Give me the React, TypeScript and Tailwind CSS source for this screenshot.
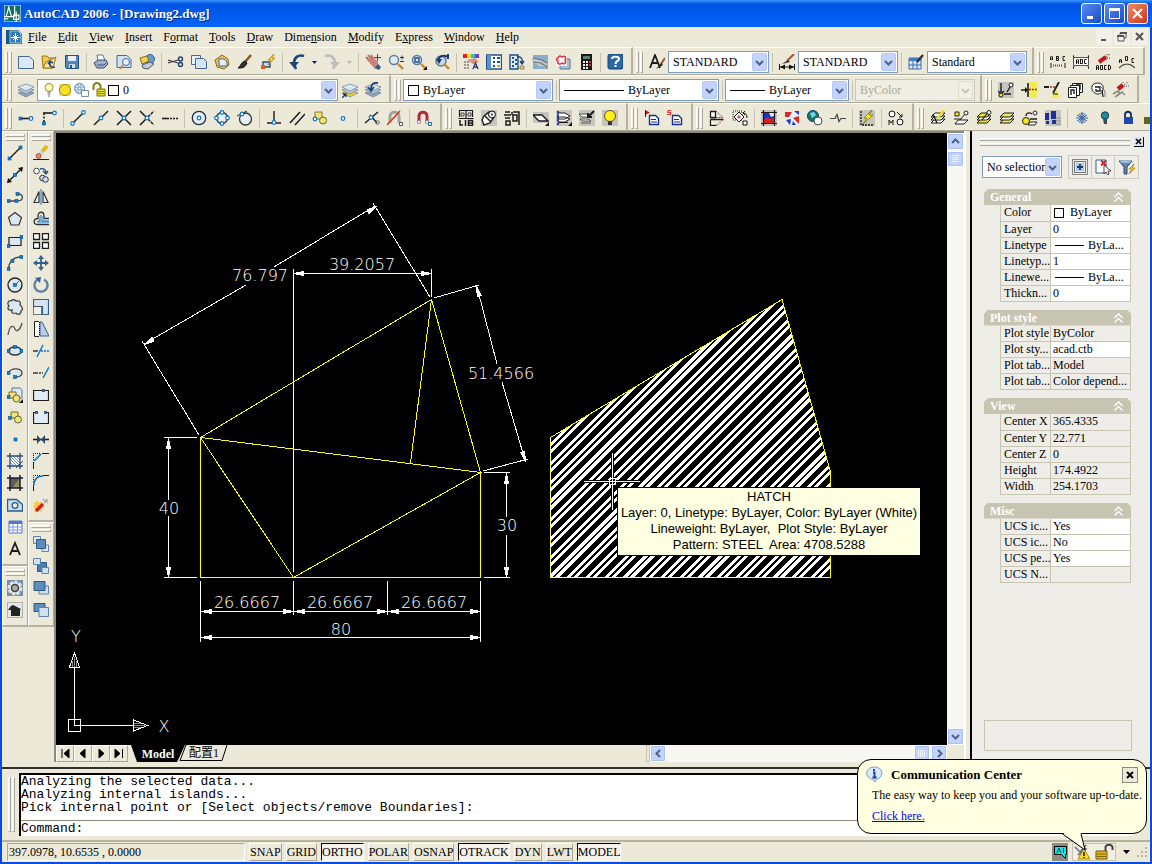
import type { ReactNode } from "react";

const serif = "font-['Liberation_Serif','Noto_Sans_CJK_TC',serif]";

type StrokeProps = { d: string; s?: string; f?: string; w?: number; dash?: string };

function L({ d, s = "#1c1c1c", f = "none", w = 1, dash }: StrokeProps) {
  return <path d={d} stroke={s} fill={f} strokeWidth={w} strokeDasharray={dash} />;
}

function Dot({ x, y }: { x: number; y: number }) {
  return <rect x={x - 1.5} y={y - 1.5} width="3" height="3" fill="#0a84d8" stroke="#064f8c" strokeWidth="0.6" />;
}

function Ring({ x, y }: { x: number; y: number }) {
  return <circle cx={x} cy={y} r="1.8" fill="#fff" stroke="#0a74c8" strokeWidth="1.2" />;
}

function Sheets({ top = "#dfe8f0", base = "#8da3ba" }: { top?: string; base?: string }) {
  return (
    <>
      <L d="M0 11l8 4 8-4-8-3z" f={base} s="#6d8197" w={0.7} />
      <L d="M0 8l8 4 8-4-8-3z" f="#b5c6d8" s="#6d8197" w={0.7} />
      <L d="M0 5l8 4 8-4-8-3z" f={top} s="#6d8197" w={0.7} />
    </>
  );
}

function BlackLayers({ fill = "#fff" }: { fill?: string }) {
  return (
    <>
      <L d="M1 13h10l4-4H5z" f={fill} />
      <L d="M1 10h10l4-4H5z" f="#fff" />
      <L d="M1 7h10l4-4H5z" f={fill} />
    </>
  );
}

const lens = <L d="M10 10l5 5" s="#c98a28" w={2.4} />;
const grayTile = <path d="M0 0h16v16H0z" fill="#c6c4be" />;

const icons: Record<string, ReactNode> = {
  // standard
  New: <L d="M.5 2.500h11l4 4v8H.5z" f="#d8e8f6" s="#47698c" />,
  Open: (
    <>
      <L d="M1 2h5l2 2h5l-2 10H2z" f="#f0c84a" s="#9a7418" />
      <L d="M5 8l10-5-3 11H2z" f="#ffe28a" s="#9a7418" />
      <L d="M14 13c-4 1-6-1-5-5M7 10l2-3 3 2" s="#1c4f8c" w={1.6} />
    </>
  ),
  Save: (
    <>
      <L d="M1.5 1.5h13v13h-12l-1-1z" f="#4f86c0" s="#274f80" />
      <path d="M4 2h8v5H4z" fill="#e6eef6" />
      <path d="M5 10h6v4H5z" fill="#d0dae6" />
      <path d="M6 11h2v3H6z" fill="#274f80" />
    </>
  ),
  Plot: (
    <>
      <L d="M4 1h6l2 6H5z" f="#fff" s="#60769a" />
      <L d="M1 9l4-3h8l2 4-4 4H4z" f="#9fb0cc" s="#3c4c70" />
      <L d="M4 11h7l2-2" s="#3c4c70" />
    </>
  ),
  "Plot Preview": (
    <>
      <L d="M1 1.5h10l4 4v8H1z" f="#cfe2f3" s="#47698c" />
      <circle cx="10" cy="8" r="3.5" fill="#eaf5ff" stroke="#3b6792" />
      <L d="M7 11l-3 4" s="#c98a28" w={2} />
    </>
  ),
  Publish: (
    <>
      <circle cx="11" cy="5" r="4.5" fill="#5f9bd2" stroke="#346699" />
      <L d="M1 4l7-2 2 5-7 3z" f="#f5cf4d" s="#8a6a10" />
      <L d="M3 11l8-3 4 2-6 5-5-1z" f="#c3cad8" s="#48566f" />
    </>
  ),
  Cut: (
    <>
      <L d="M0 6l10 3M0 9l10-3" s="#444" w={1.2} />
      <circle cx="12.5" cy="5" r="2" fill="none" stroke="#223e70" strokeWidth="1.4" />
      <circle cx="12.5" cy="10.5" r="2" fill="none" stroke="#223e70" strokeWidth="1.4" />
    </>
  ),
  Copy: (
    <>
      <L d="M.5 1.5h9v9h-9z" f="#e6eff8" s="#47698c" />
      <L d="M4.5 4.5h8l3 3v7h-11z" f="#d3e4f5" s="#47698c" />
    </>
  ),
  Paste: (
    <>
      <L d="M8 1l6 4 1 6-5 4-7-2-2-7z" f="#e3c064" s="#8b6a1e" />
      <L d="M5 5h5l3 3v4H5z" f="#e2eefa" s="#47698c" />
    </>
  ),
  "Match Properties": (
    <>
      <L d="M14 1l-6 7" s="#8a5a2a" w={2.6} />
      <L d="M8 7l2 2c-2 5-5 5-9 5 3-2 3-6 7-7z" f="#333" s="#111" />
    </>
  ),
  "Block Editor": (
    <>
      <L d="M3 8h7v5H3z" f="#c3dcf3" s="#24507e" w={1.4} />
      <path d="M1 11h4v4H1z" fill="#e06410" />
      <L d="M14 0L8 6h3l-3 5 7-7h-3z" f="#ffd838" s="#a07410" w={0.7} />
    </>
  ),
  Undo: (
    <>
      <L d="M15 2C9 0 5 4 5 9c0 2 1 4 2 6" s="#1f4478" w={2.6} />
      <path d="M0 8h10l-5 6z" fill="#1f4478" />
    </>
  ),
  Redo: (
    <>
      <L d="M1 2c6-2 10 2 10 7 0 2-1 4-2 6" s="#bcbcb8" w={2.6} />
      <path d="M16 8H6l5 6z" fill="#bcbcb8" />
    </>
  ),
  "Pan Realtime": (
    <>
      <L d="M1 3l3 3M3 1l4 5M6 1l3 5" s="#b06c5c" w={1.8} />
      <path d="M2 6l7-2 4 4v6l-3 1z" fill="#c98474" />
      <path d="M10 14l3-4 3 3-2 3z" fill="#2f5c90" />
      <L d="M12.5 0v7M9 3.500h7" s="#1f4f86" />
    </>
  ),
  "Zoom Realtime": (
    <>
      <circle cx="6" cy="6" r="4.5" fill="#dcebf7" stroke="#5c7c9c" strokeWidth="1.5" />
      {lens}
      <L d="M12 3.5h4M14 1.5v4M12 7.5h4" s="#1f3f70" />
    </>
  ),
  "Zoom Window": (
    <>
      <circle cx="6" cy="6" r="4.5" fill="#dcebf7" stroke="#5c7c9c" strokeWidth="1.5" />
      <L d="M4 4h4v4H4z" s="#1f4f90" w={1.4} />
      {lens}
      <path d="M16 12v4h-4z" fill="#111" />
    </>
  ),
  "Zoom Previous": (
    <>
      <circle cx="7" cy="7" r="5" fill="#c3d8ea" stroke="#5c7c9c" strokeWidth="1.5" />
      <L d="M4 6c2-5 6-5 10-3M14 0v5" s="#183a6c" w={2} />
      <path d="M2 5h6l-3 5z" fill="#183a6c" />
      {lens}
    </>
  ),
  Properties: (
    <>
      <path d="M0 0h4v4H0z" fill="#e32020" />
      <path d="M4 0h4v4H4z" fill="#f8e020" />
      <path d="M8 0h4v4H8z" fill="#18c8c8" />
      <path d="M12 0h4v4h-4z" fill="#9030d0" />
      <path d="M4 6l8-2 4 4-6 2z" fill="#d89080" />
      <L d="M1 8h6M1 11h6M1 14h6" s="#444" dash="2 1" />
      <L d="M10 15l2.500-6 2.500 6M11 13h3" s="#223e70" w={1.3} />
    </>
  ),
  DesignCenter: (
    <>
      <L d="M.5 1h15v14H.5z" f="#fff" s="#1f4f86" w={1.4} />
      <path d="M1 1h4v14H1z" fill="#5f92c8" />
      <L d="M7 4h2M11 4h3M7 8h2M11 8h3M7 12h2" s="#1f4f86" w={2} />
      <path d="M11 11h3v2h-3z" fill="#d8a820" />
    </>
  ),
  "Tool Palettes": (
    <>
      <L d="M1 1h8v14H1z" f="#dcebf7" s="#1f4f86" w={1.4} />
      <L d="M3 4h2M3 8h2M3 12h2M6 6h2M6 10h2" s="#1f4f86" w={2} />
      <L d="M8 3c4-1 6 2 5 6M11 7l2 3 2-3" s="#1f4478" w={1.4} />
      <path d="M11 12h4v3h-4z" fill="#f0d060" stroke="#555" strokeWidth=".6" />
    </>
  ),
  "Sheet Set Manager": (
    <>
      <path d="M1 1h15v14H1z" fill="#85aecb" />
      <path d="M0 4l9 1 6 4v4l-8-1-7-5z" fill="#c4c6c6" />
      <L d="M1 8l8 1 6 4M1 4l9 2 5 3" s="#667480" w={1.2} />
    </>
  ),
  "Markup Set Manager": (
    <>
      <L d="M5 5h10v10H5z" f="#a7bfd8" s="#5a7896" />
      <path d="M1 1h11v11H1z" fill="#f8f4f4" />
      <L d="M3 4c1-3 3-2 4-1 3-2 5 1 3 3 2 3-1 5-3 3-2 2-5 1-4-2-2 0-2-3 0-3z" s="#d83038" w={1.4} />
    </>
  ),
  QuickCalc: (
    <>
      <rect x="3" y="0" width="11" height="16" fill="#181818" />
      <path d="M5 2h7v3H5z" fill="#58806c" />
      <path d="M5 7h2v2H5zM8 7h2v2H8zM5 10h2v2H5zM8 10h2v2H8zM5 13h2v2H5zM8 13h2v2H8z" fill="#eee" />
      <path d="M11 7h2v2h-2zM11 10h2v2h-2z" fill="#d03030" />
    </>
  ),
  Help: (
    <>
      <rect x="1" y="0" width="15" height="15" rx="2" fill="#2c68a8" stroke="#173f70" />
      <L d="M5 5c0-3 7-3 7 0 0 2-3.500 2-3.500 5M8.500 11v2" s="#fff" w={2} />
    </>
  ),
  // styles
  "Text Style": (
    <>
      <L d="M1 14L6 1l5 13M3 9h6" w={1.8} />
      <L d="M16 4l-4 6" s="#8a5a2a" w={2} />
      <path d="M7 15l5-6 2 2z" fill="#222" />
    </>
  ),
  "Dimension Style": (
    <>
      <L d="M.5 10v6M15.500 10v6M1 13h14" />
      <path d="M1 13l5-2.500v5zM15 13l-5-2.500v5z" fill="#111" />
      <L d="M15 0L8 7" s="#a8542a" w={2} />
      <path d="M3 10l6-4 2 2z" fill="#333" />
    </>
  ),
  "Table Style": (
    <>
      <L d="M1 4h12v11H1z" f="#d4e6fa" s="#3a6ea8" />
      <path d="M1 4h12v3H1z" fill="#3f7cc4" />
      <L d="M1 11h12M5 7v8M9 7v8" s="#3a6ea8" />
      <L d="M15 1L9 8" s="#333" w={2.4} />
    </>
  ),
  "Text Fit": (
    <>
      <L d="M.5 6V3l1-1 1 1v3M.5 5h2M6.500 2v4.500h2v-2h-2M6.500 2.500h2v2M15 2.500h-2v4h2" />
      <L d="M1 9v5M15 9v5" />
      <L d="M3 11.5h10" s="#c02020" dash="1 1" w={2} />
    </>
  ),
  "Text Mask": (
    <>
      <L d="M.5 3.500h15v8H.5z" f="#fff" s="#555" />
      <L d="M1 4L0 1M15 4l1-3M1 12l-1 3M15 12l1 3" />
      <L d="M3.500 10V6l1-1 1 1v4M3.500 8h2M7.500 5v5M7.500 5.500h2v4h-2M13.500 5.500h-2v4h2" />
    </>
  ),
  "Explode Text": (
    <>
      <L d="M3 8l7-5" s="#c41818" w={4} />
      <L d="M10 3l4-3M11 4h4M11 0v2" s="#444" dash="1 1" />
      <L d="M.5 16v-4l1-1 1 1v4M.5 14h2M4.500 11.500h2v4h-2zM10.500 11.500h-2v4h2M12.500 11v5l2-1v-3z" />
    </>
  ),
  "Arc Aligned Text": (
    <>
      <L d="M.5 9V6l1-1 1 1v3M.5 7h2M6.500 2.500h2v4h-2zM15 4.500h-2v4h2" />
      <L d="M0 14c5-5 11-5 16 0" s="#555" w={1.4} />
    </>
  ),
  // layers
  "Layer Manager": <Sheets />,
  "Make Layer Current": (
    <>
      <Sheets base="#f0d020" />
      <L d="M0 16l4-4M1 12h3v3" s="#123a70" w={1.3} />
    </>
  ),
  "Layer Previous": (
    <>
      <Sheets />
      <L d="M13 1C8 0 6 3 6 7M3 5l3 4 3-4" s="#1f4478" w={1.8} />
    </>
  ),
  "Xref to Block": (
    <>
      {grayTile}
      <L d="M3 1v11M0 9l3 3 3-3M9 10l5-8M6 12h7" w={1.4} />
      <circle cx="13" cy="3" r="2" fill="#fff" stroke="#222" />
      <circle cx="3" cy="13" r="2" fill="#f6e626" stroke="#222" />
    </>
  ),
  "Block Trim": (
    <>
      <path d="M9 0h7v16H9L5 8z" fill="#f2ea58" />
      <L d="M0 8h6M7 1v14" w={1.6} />
      <path d="M4 5l3 3-3 3z" fill="#111" />
      <L d="M8 7.5h8" s="#b02020" dash="2 1" w={1.5} />
    </>
  ),
  "Block Extend": (
    <>
      <path d="M12 6l4 10H7z" fill="#f2ea58" />
      <L d="M0 5h5M9 11l6-11" w={1.8} />
      <L d="M6 5h5" s="#b02020" dash="2 1" w={1.5} />
      <L d="M9 12h5" />
    </>
  ),
  "Move Copy Rotate": (
    <>
      <L d="M5.500 1.500h10v9h-10z" f="#fff" />
      <L d="M3.500 3.500h9v10h-9z" f="#fff" />
      <L d="M1.500 5.500h8v10h-8z" f="#fff" />
      <L d="M4 13V8h3v4M9 3h4v5" w={1.4} />
    </>
  ),
  "Revision Cloud": (
    <>
      <L d="M2 4c2-4 9-4 11 0 1 4-1 8-5 8s-7-4-6-8z" f="#fff" />
      <L d="M5 5h5v4H6V7M12 8l1 7" w={1.3} />
      <L d="M10 4l5 5v6" s="#777" />
    </>
  ),
  "Burst Attributes": (
    <>
      <L d="M5 7l5-4" s="#c41818" w={4.5} />
      <L d="M11 3l4-3M11 4h5M10 0v2" s="#555" dash="1 1" />
      <L d="M0 12l5-3 2 2-5 4M4 14l5-4 3 3" s="#888" w={1.6} />
    </>
  ),
  // object snap
  "Temporary Track Point": (
    <>
      <L d="M2 8.5h10" w={1.6} />
      <Dot x={2.5} y={8.5} />
      <Ring x={13} y={8.5} />
    </>
  ),
  "Snap From": (
    <>
      <L d="M2 3h10" w={1.6} />
      <L d="M3 3v10" dash="2 1.5" w={1.6} />
      <Dot x={3} y={13.5} />
      <Ring x={13.5} y={3} />
    </>
  ),
  Endpoint: (
    <>
      <L d="M3 13L13 3" w={1.4} />
      <Ring x={2.5} y={13.5} />
      <Ring x={13.5} y={2.5} />
    </>
  ),
  Midpoint: (
    <>
      <L d="M1 15L15 1" w={1.4} />
      <Ring x={8} y={8} />
    </>
  ),
  Intersection: (
    <>
      <L d="M1 1l14 14M1 15L15 1" w={1.5} />
      <Ring x={8} y={8} />
    </>
  ),
  "Apparent Intersection": (
    <>
      <L d="M1 1l7 7M1 15l7-7" w={1.5} />
      <L d="M9 9l6 6M9 7l6-6" dash="3 1" w={1.5} />
      <Ring x={8} y={8} />
    </>
  ),
  Extension: (
    <>
      <L d="M0 8.5h7" w={1.6} />
      <L d="M8 8.5h8" dash="2 1" w={1.4} />
    </>
  ),
  Center: (
    <>
      <circle cx="8" cy="8" r="6.7" fill="#e8eff8" stroke="#1d2e48" strokeWidth="1.3" />
      <Ring x={8} y={8} />
    </>
  ),
  Quadrant: (
    <>
      <circle cx="8" cy="8" r="5.5" fill="#e8eff8" stroke="#333" strokeWidth="1.4" />
      <Ring x={8} y={2.5} />
      <Ring x={8} y={13.5} />
      <Ring x={2.5} y={8} />
      <Ring x={13.5} y={8} />
    </>
  ),
  Tangent: (
    <>
      <circle cx="8.5" cy="9" r="6" fill="#e8eff8" stroke="#333" strokeWidth="1.3" />
      <L d="M0 6l10-5" />
      <Ring x={5} y={4} />
    </>
  ),
  Perpendicular: (
    <>
      <L d="M8 1v12M1 13h14" w={1.4} />
      <Ring x={8} y={12.5} />
    </>
  ),
  Parallel: <L d="M1 13L11 2M6 15L16 4" w={1.5} />,
  Insert: (
    <>
      <path d="M3 2h7v7H3z" fill="#f3e37a" stroke="#8a7a20" />
      <circle cx="11" cy="10.5" r="3.5" fill="#f3e37a" stroke="#5a6a30" />
      <Ring x={3} y={9} />
    </>
  ),
  Node: <Ring x={8} y={8.5} />,
  Nearest: (
    <>
      <L d="M1 13L14 2M6 5l7 8" w={1.4} />
      <Ring x={7} y={7.5} />
      <circle cx="13.5" cy="12.5" r="1.8" fill="none" stroke="#666" />
    </>
  ),
  "Snap None": (
    <>
      <L d="M3 13V6c0-5 9-5 9 0v7" s="#a4a4a0" w={3} />
      <L d="M0 15L13 1" s="#d83a2a" w={1.6} />
      <path d="M12.500 12.500h3v3h-3z" fill="#fff" stroke="#555" />
    </>
  ),
  "Snap Settings": (
    <>
      <L d="M3 13V6c0-5 8-5 8 0v7" s="#b3283a" w={3} />
      <path d="M1.5 10.500h3v3h-3zM9.5 10.500h3v3h-3z" fill="#eee" stroke="#666" strokeWidth=".5" />
      <path d="M12.500 12.500h3v3h-3z" fill="#fff" stroke="#0a74c8" />
    </>
  ),
  // layout tools
  Library: (
    <>
      <L d="M1.500 7V.5h13V7M.5 8.500h15M8 1v7" w={1.2} />
      <L d="M3 3h3v3H3zM10 3h3v3h-3z" s="#444" />
      <L d="M2 10v5h3M7.500 10v6M10.500 10.500h4v5h-4zM11 13h3" w={1.5} />
    </>
  ),
  Bolt: (
    <>
      {grayTile}
      <L d="M1 10l2-4 5-4 5 5-4 6-6 2z" f="#fff" w={1.4} />
      <L d="M4 6l6 6M7 4l4 4" w={1.5} />
      <circle cx="11" cy="4.500" r="3.500" fill="#e8e8e4" stroke="#111" />
      <circle cx="11" cy="4.500" r="1" fill="#444" />
    </>
  ),
  Annotate: <L d="M1 2h5M0 5h7M1 8h5M2 11h4v4H2zM9 2h6v13M9 5h4v6H9zM8 2v3" w={1.5} />,
  Plane: (
    <>
      <path d="M0 2h16v11H0z" fill="#c6c4be" />
      <L d="M0 5h9l6 6H6z" f="#fff" w={1.4} />
      <path d="M16 12v4h-4z" fill="#111" />
    </>
  ),
  Stack: (
    <>
      {grayTile}
      <L d="M2 3h7l5 3-5 3H2zM2 7h7l5 2-5 3H2zM2 12.500h10" f="#fff" />
      <L d="M2 1v14" s="#2038c8" w={2} dash="2 2" />
      <path d="M16 12v4h-4z" fill="#111" />
    </>
  ),
  "Stack Back": (
    <>
      {grayTile}
      <L d="M0 4h8l3 3H3zM1 9h8l3 2H4zM2 13h10" f="#fff" s="#555" />
      <L d="M15 1L9 7M9 3v4h4" w={2} />
    </>
  ),
  Lamp: (
    <>
      {grayTile}
      <circle cx="8" cy="6" r="5.5" fill="#fff21c" stroke="#5e5a10" />
      <path d="M6 11h4v4H6z" fill="#333" />
    </>
  ),
  "Page Flag": (
    <>
      <L d="M5.500 5.500h6l3 3v6h-9z" f="#fff" s="#1a2c8c" w={1.4} />
      <L d="M7 9.500h5M7 12h6" s="#1a2c8c" />
      <path d="M1 0l5 2.500L1 5z" fill="#c01818" />
      <L d="M1.500 0v7" />
    </>
  ),
  "Page Script": (
    <>
      <L d="M5.500 5.500h6l3 3v6h-9z" f="#fff" s="#1a2c8c" w={1.4} />
      <L d="M7 9.500h5M7 12h6" s="#1a2c8c" />
      <L d="M4 .5H1v2h2.500v2H0" s="#e03030" w={1.2} />
    </>
  ),
  "Clip Boundary": (
    <>
      <L d="M1.500 1.500h5v6h-5zM1.500 9.500h13M1.500 9.500v6h6" f="#fff" w={1.3} />
      <L d="M7 1l7 6.500H7M8 15.500l6-6" s="#a83a3a" dash="2 1" />
    </>
  ),
  "Rotate Clip": (
    <>
      <L d="M1 1h9v9H1z" dash="1 1" />
      <L d="M7 2l5 5-5 5-5-5z" f="#fff" />
      <L d="M11 3c3 0 4 2 4 5M11 3l2-2M11 3l2 2" />
      <L d="M7 5v4M5 7h4" s="#a83a3a" />
      <path d="M11 11h4v4h-4z" fill="#fff" stroke="#111" />
    </>
  ),
  "Image Frame": (
    <>
      {grayTile}
      <path d="M3 3h10v10H3z" fill="#1c30d0" />
      <path d="M3 10l3-3 4 2 3-1v5H3z" fill="#d82020" />
      <path d="M8 3h5v3l-3 1z" fill="#e2f0fa" />
      <L d="M2.5 0v16M13.5 0v16M0 2.5h16M0 13.5h16" w={1.2} />
    </>
  ),
  "Image Clip": (
    <>
      <path d="M1 1h14v14H1z" fill="#e2f0fa" />
      <path d="M1 2h7L5 7H1zM9 8l6-2v8z" fill="#d82828" />
      <path d="M10 1h5v4zM2 10l5-1-1 6zM9 11l3 4H8z" fill="#2038c8" />
    </>
  ),
  "Image Globe": (
    <>
      <circle cx="6" cy="6" r="5.5" fill="#147a68" stroke="#083c6c" />
      <path d="M3 3l4-1 2 3-4 3z" fill="#7cd0f0" />
      <circle cx="11" cy="11" r="4" fill="#fff" stroke="#444" />
    </>
  ),
  "Break Line": <L d="M0 8.5h5l2-4 2 7 2-3h5" s="#444" w={1.2} />,
  "Quick Select": (
    <>
      {grayTile}
      <L d="M2 1v14h13" dash="2 1" w={1.3} />
      <L d="M13 0L5 8h3l-4 6 10-9h-4z" f="#fff21c" s="#777010" w={0.8} />
    </>
  ),
  "Move Objects": (
    <>
      <circle cx="4" cy="4" r="3" fill="#fff" stroke="#111" />
      <circle cx="12" cy="12" r="3" fill="#fff" stroke="#111" />
      <L d="M1 15v-5l2 3 2-3v5M9 2l5 5M11 7h3V4" />
    </>
  ),
  // layers II
  "Layer Edit": (
    <>
      <BlackLayers />
      <L d="M14 0l-7 9" s="#f0dc28" w={2.6} />
      <L d="M3 4l4 9" w={1.4} />
    </>
  ),
  "Layer Match": (
    <>
      <L d="M2 14h9l4-4H5z" f="#fff" />
      <path d="M2 2h4v4H2z" fill="#f6e626" stroke="#222" />
      <L d="M7 10l5-6M1 9h7" />
      <circle cx="13" cy="3" r="2" fill="#fff" stroke="#222" />
    </>
  ),
  "Layer Current": (
    <>
      <BlackLayers fill="#f6e626" />
      <L d="M6 10l7-9" w={1.2} />
      <circle cx="13" cy="2.5" r="2" fill="#fff" stroke="#222" />
    </>
  ),
  "Layer Isolate": <BlackLayers fill="#f2e458" />,
  "Layer Copy": (
    <>
      <L d="M6 15h7l2-3H8z" f="#fff" />
      <circle cx="4" cy="11" r="3.5" fill="#f6e626" stroke="#222" />
      <circle cx="13" cy="3" r="2" fill="#fff" stroke="#222" />
      <L d="M4 6c0-3 3-4 6-2M8 9h7" w={1.3} />
    </>
  ),
  "Layer Walk": (
    <>
      {grayTile}
      <path d="M0 3h4v7H0zM6 1h5v8H6z" fill="#1c2f9c" />
      <path d="M1 11h3v3H1zM7 10h4v4H7z" fill="#1c2f9c" />
      <L d="M11 8h5M11 11h5M11 14h5" s="#888" />
    </>
  ),
  "Layer Freeze": (
    <L d="M8 2v12M3 5l10 6M3 11l10-6M6.500 3L8 4.500 9.500 3M6.500 13L8 11.500 9.500 13M2 8h12M5 3.500L11 12.500M11 3.500L5 12.500" s="#2c5cac" />
  ),
  "Layer Off": (
    <>
      <circle cx="8" cy="5.5" r="3.7" fill="#1e8c94" stroke="#0e3c5c" />
      <path d="M6 9h4v5H7z" fill="#3c4a54" />
    </>
  ),
  "Layer Lock": (
    <>
      <L d="M5 7V4c1-3 5-3 6 0v3" s="#0e2a58" w={1.8} />
      <path d="M4 7h9v7H4z" fill="#1c48b0" />
    </>
  ),
  "Layer Unlock": (
    <>
      <L d="M8 7V3c1-2 5-2 6 0v4" s="#222" w={1.8} />
      <path d="M1 7h10v7H1z" fill="#6a6410" />
    </>
  ),
  // draw
  Line: (
    <>
      <L d="M3 13L13 3" w={1.5} />
      <Dot x={2.5} y={13.5} />
      <Dot x={13.5} y={2.5} />
    </>
  ),
  "Construction Line": (
    <>
      <L d="M1 15L15 1" w={1.5} />
      <path d="M0 16l1-5 4 4zM16 0l-5 1 4 4z" fill="#111" />
      <Dot x={8} y={8} />
    </>
  ),
  Polyline: (
    <>
      <L d="M2 12h8c7 0 7-7 1-7" w={1.3} s="#444" />
      <Dot x={1.5} y={12} />
      <Dot x={9.5} y={12} />
      <Dot x={10.5} y={5} />
    </>
  ),
  Polygon: <L d="M8 1.5l6.500 5L12 14H4L1.500 6.500z" f="#dbe8f4" s="#333" w={1.2} />,
  Rectangle: (
    <>
      <L d="M2 4.5h12v8H2z" f="#dbe8f4" w={1.2} />
      <Dot x={1.5} y={13} />
      <Dot x={14.5} y={4} />
    </>
  ),
  Arc: (
    <>
      <L d="M1.5 14C2 6 7 2 14 2" s="#444" w={1.3} />
      <Dot x={1.5} y={14} />
      <Dot x={5.5} y={6} />
      <Dot x={14.5} y={2} />
    </>
  ),
  Circle: (
    <>
      <circle cx="8" cy="8" r="7" fill="#dbe8f4" stroke="#222" strokeWidth="1.3" />
      <L d="M8 8l4-4" s="#0a74c8" />
      <Dot x={8} y={8} />
    </>
  ),
  "Cloud Outline": (
    <L d="M4 2c2-2 4-1 5 0 4-1 5 2 4 4 3 2 3 5 1 6 0 4-4 4-5 2-3 1-5 0-4-3C1 12 0 9 2 7 0 5 1 1 4 2z" f="#dbe8f4" s="#444" w={1.3} />
  ),
  Spline: <L d="M1 14C3 2 7 5 8 8s5 2 7-6" s="#555" w={1.3} />,
  Ellipse: (
    <>
      <ellipse cx="8" cy="8" rx="6.5" ry="4" fill="#dbe8f4" stroke="#333" strokeWidth="1.3" />
      <Dot x={1.5} y={8} />
      <Dot x={14.5} y={8} />
      <Dot x={8} y={4} />
    </>
  ),
  "Ellipse Arc": (
    <>
      <L d="M2 8c0-5 13-6 13 0 0 3-3 4-7 4" f="#dbe8f4" s="#444" w={1.3} />
      <Dot x={1.5} y={8} />
      <Dot x={8} y={12} />
    </>
  ),
  "Insert Block": (
    <>
      <L d="M5 1h8l2 2v8H5z" f="#dbe8f4" s="#4f7ca4" />
      <path d="M2 5h7v6H2z" fill="#f3e37a" stroke="#7a6c20" />
      <circle cx="9.5" cy="11.5" r="3.5" fill="#f3e37a" stroke="#5a6a30" />
      <Dot x={1.5} y={10} />
      <path d="M16 12v4h-4z" fill="#111" />
    </>
  ),
  "Make Block": (
    <>
      <path d="M4 3h7v6H4z" fill="#f3e37a" stroke="#7a6c20" />
      <circle cx="11" cy="10.5" r="3.5" fill="#f3e37a" stroke="#5a6a30" />
      <Dot x={3} y={9} />
    </>
  ),
  Point: <Dot x={8.5} y={8.5} />,
  Hatch: (
    <>
      <path d="M3 3h10v10H3z" fill="#fff" />
      <L d="M3 3l10 10M3 6l7 7M3 9l4 4M6 3l7 7M9 3l4 4" s="#5f92c8" />
      <L d="M3 0v16M13 0v16M0 3h16M0 13h16" s="#2c4c74" w={1.3} />
      <L d="M9 15l7-7" s="#444" />
    </>
  ),
  Gradient: (
    <>
      <path d="M3 3h10v10H3z" fill="#5e5a5e" />
      <path d="M13 3v10H5z" fill="#96904c" />
      <L d="M3 0v16M13 0v16M0 3h16M0 13h16" s="#1c1c38" w={1.5} />
    </>
  ),
  Region: (
    <>
      <L d="M.5 2.5h9l6 5v6.500H.5z" f="#c7dcee" s="#2d5a86" w={1.3} />
      <circle cx="8" cy="8.5" r="2.8" fill="#f4f4ee" stroke="#2d5a86" strokeWidth="1.3" />
    </>
  ),
  Table: (
    <>
      <path d="M2 2h13v12H2z" fill="#fff" stroke="#5878c8" />
      <path d="M2 2h13v3H2z" fill="#5878c8" />
      <L d="M2 8h13M2 11h13M6 5v9M10.5 5v9" s="#7c9ae0" />
    </>
  ),
  "Multiline Text": <L d="M3 14L8 2l5 12M5 10h6" w={1.8} />,
  Gear: (
    <>
      <path d="M0 0h16v16H0z" fill="#6f90ae" />
      <circle cx="8" cy="8" r="6" fill="#ddd" stroke="#e6e6e2" strokeWidth="3" strokeDasharray="3 1.5" />
      <circle cx="8" cy="8" r="3.5" fill="#aaa" stroke="#444" strokeWidth="1.5" />
    </>
  ),
  Home: (
    <>
      <L d="M.5.5h15v15H.5z" s="#777" dash="1 1" f="#e6e6e2" />
      <path d="M1 8l3-4 2-1 2 1 6 3-1 1v6H4V8z" fill="#222" />
    </>
  ),
  // modify
  Erase: (
    <>
      <L d="M0 14.5h16" />
      <L d="M14 1L8 8" s="#e4b820" w={4} />
      <L d="M9 6l-3 4" s="#c7d8e8" w={4} />
      <circle cx="5.5" cy="11" r="2.5" fill="#e88878" stroke="#8c3a2c" strokeWidth=".7" />
    </>
  ),
  "Copy Object": (
    <>
      <circle cx="3.5" cy="4" r="2.8" fill="#fff" stroke="#444" />
      <circle cx="9.5" cy="11" r="2.8" fill="#cfe0f0" stroke="#333" />
      <circle cx="12.5" cy="12.5" r="2.8" fill="#cfe0f0" stroke="#333" />
      <L d="M7 2c3-1 6 0 6 4M10 4l3 3 2-3" s="#1f4f86" w={1.4} />
    </>
  ),
  Mirror: (
    <>
      <L d="M1 13.5h5v-11zM15 13.5h-5v-11z" f="#e8eff6" s="#333" w={1.2} />
      <L d="M8 0v16" s="#0a74c8" />
    </>
  ),
  Offset: (
    <>
      <L d="M16 13.5H4c-4 0-4-6 1-6V5c0-5 6-5 6 0v2.500h5" s="#333" w={1.3} />
      <L d="M16 11H5c-1 0-1-1 2-1V6c0-2 2-2 2 0v4h7" s="#0a74c8" />
    </>
  ),
  Array: <L d="M.5.5h6v6h-6zM9.500.5h6v6h-6zM.5 9.500h6v6h-6zM9.500 9.500h6v6h-6z" f="#fff" w={1.3} />,
  Move: (
    <>
      <L d="M8 2v12M2 8h12" s="#35618f" w={1.8} />
      <path d="M8 0l3 4H5zM8 16l3-4H5zM0 8l4-3v6zM16 8l-4-3v6z" fill="#35618f" />
    </>
  ),
  Rotate: (
    <>
      <L d="M5 2.5A6.500 6.500 0 1 0 11 2.500" s="#5f84a8" w={2.4} />
      <path d="M2 1l6-1-1 6z" fill="#35618f" />
    </>
  ),
  Scale: (
    <>
      <L d="M.5.5h15v15h-6v-8h-9z" f="#d3e4f4" s="#35618f" w={1.2} />
      <L d="M.5 7.500h8v8h-8z" dash="1 1" s="#000" f="#eef0ee" />
    </>
  ),
  Stretch: (
    <>
      <path d="M7 1h2l7 14H7z" fill="#b9cfe4" stroke="#35618f" />
      <L d="M6 .5H1.500v15H6" f="#fff" />
      <L d="M6.5 1v14" dash="1 1" s="#000" />
    </>
  ),
  Trim: (
    <>
      <L d="M0 8h5" w={1.3} />
      <L d="M8 8h8" dash="2 1" s="#0a74c8" w={1.3} />
      <L d="M4 14L10 2" s="#0a74c8" w={1.4} />
    </>
  ),
  Extend: (
    <>
      <L d="M0 8h5" w={1.3} />
      <L d="M6 8h4" dash="2 1" s="#333" w={1.3} />
      <L d="M10 13L16 2" s="#0a74c8" w={1.4} />
    </>
  ),
  "Break at Point": (
    <>
      <L d="M.5 3.5h15v10H.5z" f="#e3ecf5" w={1.2} />
      <path d="M9 2h3v3H9z" fill="#35618f" />
    </>
  ),
  Break: (
    <>
      <L d="M3 3.5H.5v11h15v-11H13" f="#e3ecf5" w={1.2} />
      <path d="M2 2h3v3H2zM11 2h3v3h-3z" fill="#35618f" />
    </>
  ),
  Join: (
    <>
      <L d="M0 8.5h16" w={1.6} />
      <path d="M4 4l4 4.500L4 13zM12 4L8 8.500l4 4.500z" fill="#254872" />
    </>
  ),
  Chamfer: (
    <>
      <L d="M.5 7V.5H8" dash="1 1" />
      <L d="M9 .5h7M.5 9v7" />
      <L d="M1 8l7-7" s="#0a74c8" w={1.6} />
    </>
  ),
  Fillet: (
    <>
      <L d="M.5 7V.5H8" dash="1 1" />
      <L d="M10 .5h6M.5 11v5" />
      <L d="M.5 11C1 4 4 1 10 1" s="#0a74c8" w={1.6} />
    </>
  ),
  Explode: (
    <>
      <path d="M0 5l3 1 1-3 2 3 3-2-1 4 4 2-4 1 1 4-4-2-4 3 1-4-2-3 2-1z" fill="#f8c83c" />
      <L d="M3 14l7-7" s="#d01c1c" w={3.2} />
      <L d="M11 6l4-4M10 2l5 4" s="#888" dash="1 1" w={1.6} />
    </>
  ),
  "Bring to Front": (
    <>
      <L d="M.5.5h7v7h-7zM9 9h6.500v6.500H9z" f="#dbe8f4" s="#5f84a8" />
      <L d="M3.5 3.5h9v9h-9z" f="#5c8cbc" s="#2d5a86" />
    </>
  ),
  "Send to Back": (
    <>
      <L d="M4.5 4.5h9v9h-9z" f="#4a7cb4" s="#2d5a86" />
      <L d="M.5.5h7v6h-7zM9 9.500h6.500v6H9z" f="#cfe0ee" s="#5f84a8" />
    </>
  ),
  "Bring Above": (
    <>
      <L d="M6 6h9.500v8H6z" f="#cfe0ee" s="#5f84a8" />
      <L d="M1 1.5h11v9H1z" f="#5c8cbc" s="#2d5a86" />
    </>
  ),
  "Send Under": (
    <>
      <L d="M1 1.5h11v8H1z" f="#5c8cbc" s="#2d5a86" />
      <L d="M6 5.5h9.500v9H6z" f="#cfe0ee" s="#5f84a8" />
    </>
  ),
  // palette
  "Toggle Pickadd": (
    <>
      <L d="M.5.5h15v15H.5z" dash="1 1" />
      <L d="M2.500 2.500h11v11h-11z" dash="1 1" s="#000" />
      <path d="M4 4h8v8H4z" fill="#aac8ec" />
      <L d="M8 5v6M5 8h6" s="#183a6c" w={1.8} />
    </>
  ),
  "Select Objects": (
    <>
      <L d="M1 1h10v13H1z" f="#fff" s="#35618f" />
      <L d="M6 1.500l5 5M11 1.500l-5 5" s="#d42020" w={1.8} />
      <path d="M9 6v9l2-2 2 3 1-1-1-3h3z" fill="#fff" stroke="#222" strokeWidth=".8" />
    </>
  ),
  "Filter Objects": (
    <>
      <path d="M0 2h13L8 8v7H5V8z" fill="#5f84a8" stroke="#2c4c6c" />
      <ellipse cx="6.5" cy="2.5" rx="5.5" ry="1.5" fill="#9cc0dc" />
      <L d="M15 5l-5 5h3l-3 5 6-6h-3z" f="#ffd838" s="#a07410" w={0.7} />
    </>
  ),
};

function Icon({ name }: { name: string }) {
  return (
    <svg viewBox="0 0 16 16" className="w-4 h-4 shrink-0" aria-hidden="true">
      {icons[name]}
    </svg>
  );
}

const ridge = "border border-t-white border-l-white border-r-[#aca899] border-b-[#aca899] bg-[#f4f2e8]";

function Grip({ vertical, height = "h-[22px]" }: { vertical?: boolean; height?: string }) {
  return vertical ? (
    <div className="flex flex-col gap-px w-5 mx-auto mt-0.5 mb-px">
      <div className={`h-[3px] ${ridge}`} />
      <div className={`h-[3px] ${ridge}`} />
    </div>
  ) : (
    <div className={`flex gap-px mr-0.5 shrink-0 ${height}`}>
      <div className={`w-[3px] ${ridge}`} />
      <div className={`w-[3px] ${ridge}`} />
    </div>
  );
}

function Sep() {
  return (
    <div className="w-1.5 shrink-0 flex justify-center">
      <div className="w-px h-[19px] bg-[#c5c2b2]" />
    </div>
  );
}

function Tool({ name }: { name: string }) {
  return (
    <button type="button" aria-label={name} className="w-[23px] h-[22px] shrink-0 flex items-center justify-center hover:bg-[#c1d2ee]">
      <Icon name={name} />
    </button>
  );
}

function Tools({ names }: { names: string[] }) {
  return (
    <>
      {names.map((name, i) => (name === "|" ? <Sep key={i} /> : <Tool key={name} name={name} />))}
    </>
  );
}

function HistoryCaret({ label, faded }: { label: string; faded?: boolean }) {
  return (
    <button type="button" aria-label={label} className="w-3 h-[22px] flex items-center justify-center shrink-0">
      <svg width="5" height="3" aria-hidden="true">
        <path d="M0 0h5L2.500 3z" fill={faded ? "#b8b8b0" : "#0a1e6c"} />
      </svg>
    </button>
  );
}

function Bar({ children }: { children: ReactNode }) {
  return (
    <div className="h-7 flex items-center shrink-0 pt-0.5 pl-[3px] pr-[5px] border-t border-t-white border-b border-b-[#aca899] border-r-2 border-r-[#b5b2a2]">
      <Grip />
      {children}
    </div>
  );
}

function Chevron({ dir = "down", faded }: { dir?: "up" | "down" | "left" | "right"; faded?: boolean }) {
  const paths = {
    down: "M1 3l3.500 3.500L8 3",
    up: "M1 6l3.500-3.500L8 6",
    left: "M6 1L2.500 4.500L6 8",
    right: "M3 1l3.500 3.500L3 8",
  };
  return (
    <svg width="9" height="9" aria-hidden="true">
      <path d={paths[dir]} fill="none" stroke={faded ? "#c6c5bb" : "#4d6185"} strokeWidth="2" />
    </svg>
  );
}

type PickProps = { label: string; value: string; width: string; lead?: ReactNode; disabled?: boolean };

function Pick({ label, value, width, lead, disabled }: PickProps) {
  return (
    <label
      className={`${width} h-[22px] shrink-0 flex items-center pl-1 pr-px border ${
        disabled ? "border-[#c9c7ba] bg-[#f0eee2] text-[#aca899]" : "border-[#7f9db9] bg-white text-black"
      }`}
    >
      {lead}
      <select aria-label={label} disabled={disabled} className="appearance-none bg-transparent flex-1 min-w-0 h-full outline-none text-xs">
        <option>{value}</option>
      </select>
      <span
        className={`w-[15px] h-[18px] shrink-0 flex items-center justify-center rounded-xs border ${
          disabled ? "border-[#dddbd0] bg-[#f2f0e6]" : "border-[#b4c8f6] bg-[#c3d3fd]"
        }`}
      >
        <Chevron faded={disabled} />
      </span>
    </label>
  );
}

const swatch = <span className="w-[11px] h-[11px] border border-black bg-white shrink-0 mr-1" />;

const layerState = (
  <span className="flex items-center shrink-0">
    <svg width="66" height="18" viewBox="0 0 66 18" aria-hidden="true">
      <circle cx="7" cy="6.5" r="4" fill="#ffffb8" stroke="#9c8c20" />
      <L d="M5.5 11h3M5.5 13h3M6 15h2" s="#666" />
      <path d="M17 3h12v12H17z" fill="#f2e070" />
      <circle cx="23" cy="9" r="5.5" fill="#ffe11c" stroke="#86843c" />
      <circle cx="37.5" cy="7.5" r="5" fill="#a8c6de" stroke="#6488ac" />
      <L d="M37.500 3v9M33 7.500h9M34 4l7 7M41 4l-7 7" s="#dcebf7" />
      <circle cx="37.5" cy="7.5" r="1.5" fill="#fff" stroke="#6488ac" />
      <path d="M39.5 9.5h7v6h-7z" fill="#fff" stroke="#7c8c9c" />
      <L d="M51.5 9V5c1-4 6-4 7 0v5" s="#84840c" w={2} />
      <path d="M55 8h8v7h-8z" fill="#e0dc1c" stroke="#77740c" />
      <L d="M56 10.5h6M56 12.5h6" s="#8c8a10" />
    </svg>
    {swatch}
  </span>
);

function Rule({ width }: { width: string }) {
  return <span className={`${width} h-px bg-black shrink-0 mr-1`} />;
}

function TitleBar() {
  const btn = "w-[21px] h-[21px] rounded-[3px] border border-white flex items-center justify-center";
  return (
    <header className="h-[27px] shrink-0 flex items-center pl-1 pr-1 bg-linear-to-b from-[#3a95ff] via-[#0054e3] via-15% to-[#0463fa]">
      <svg width="17" height="17" viewBox="0 0 16 16" className="mr-[3px]" aria-hidden="true">
        <path d="M0 0h16v16H0z" fill="#0d6f68" />
        <path d="M0 0h16v16H0z" fill="none" stroke="#e9f6f4" />
        <L d="M2 11l2.500-9L7 11M0 11h9M10 1v10M9 9.500h5v4H9zM11.500 6v10M0 13h4" s="#fff" w={1.1} />
      </svg>
      <h1 className="flex-1 text-white text-[13px] leading-4 font-bold [text-shadow:1px_1px_0_#002a80]">
        AutoCAD 2006 - [Drawing2.dwg]
      </h1>
      <div className="flex gap-0.5">
        <button type="button" aria-label="Minimize" className={`${btn} bg-linear-to-br from-[#5a8cf0] to-[#1c48c8]`}>
          <svg width="13" height="13" aria-hidden="true"><path d="M2 9h6v3H2z" fill="#fff" /></svg>
        </button>
        <button type="button" aria-label="Maximize" className={`${btn} bg-linear-to-br from-[#5a8cf0] to-[#1c48c8]`}>
          <svg width="13" height="13" aria-hidden="true">
            <path d="M1.5 2h10v9.500h-10z" fill="none" stroke="#fff" />
            <path d="M1 1h11v3H1z" fill="#fff" />
          </svg>
        </button>
        <button type="button" aria-label="Close" className={`${btn} bg-linear-to-br from-[#ee8866] to-[#cc3410]`}>
          <svg width="13" height="13" aria-hidden="true">
            <path d="M2 2l9 9M11 2l-9 9" stroke="#fff" strokeWidth="2.2" />
          </svg>
        </button>
      </div>
    </header>
  );
}

// [before, access key, after]
const menus = [
  ["", "F", "ile"],
  ["", "E", "dit"],
  ["", "V", "iew"],
  ["", "I", "nsert"],
  ["F", "o", "rmat"],
  ["", "T", "ools"],
  ["", "D", "raw"],
  ["Dime", "n", "sion"],
  ["", "M", "odify"],
  ["E", "x", "press"],
  ["", "W", "indow"],
  ["", "H", "elp"],
];

function MenuBar() {
  const mdi = "w-4 h-4 bg-[#f2f0e8] flex items-center justify-center";
  return (
    <nav className="h-5 shrink-0 flex items-center pl-1 pr-0.5">
      <svg width="16" height="16" viewBox="0 0 16 16" aria-hidden="true">
        <path d="M0 1h12l4 4v10H0z" fill="#1a5688" />
        <path d="M4 2h8l3 3v9H4z" fill="#2d7cb8" stroke="#bcd8ec" strokeWidth=".8" />
        <L d="M9.5 4v9M5 8.5h9M7 6l5 5M12 6l-5 5" s="#fff" />
      </svg>
      <div className="flex-1 flex items-center gap-[11px] pl-1.5">
        {menus.map(([pre, key, post]) => (
          <button key={pre + key + post} type="button" className="text-xs leading-4">
            {pre}
            <span className="underline">{key}</span>
            {post}
          </button>
        ))}
      </div>
      <div className="flex gap-0.5">
        <button type="button" aria-label="Minimize drawing" className={mdi}>
          <svg width="10" height="10" aria-hidden="true"><path d="M2 7h5v2H2z" fill="#555" /></svg>
        </button>
        <button type="button" aria-label="Restore drawing" className={mdi}>
          <svg width="10" height="10" aria-hidden="true">
            <path d="M3 3V1h6v5H7M1 4h6v5H1z" fill="none" stroke="#555" />
            <path d="M3 0h7v2H3zM0 3h7v2H0z" fill="#555" />
          </svg>
        </button>
        <button type="button" aria-label="Close drawing" className={mdi}>
          <svg width="10" height="10" aria-hidden="true"><path d="M1 1l7 7M8 1L1 8" stroke="#555" strokeWidth="2" /></svg>
        </button>
      </div>
    </nav>
  );
}

function Toolbars() {
  return (
    <div className="shrink-0 overflow-hidden">
      <div className="flex">
        <Bar>
          <Tools
            names={["New", "Open", "Save", "|", "Plot", "Plot Preview", "Publish", "|", "Cut", "Copy", "Paste", "Match Properties", "Block Editor", "|", "Undo"]}
          />
          <HistoryCaret label="Undo history" />
          <Tool name="Redo" />
          <HistoryCaret label="Redo history" faded />
          <Tools
            names={["|", "Pan Realtime", "Zoom Realtime", "Zoom Window", "Zoom Previous", "|", "Properties", "DesignCenter", "Tool Palettes", "Sheet Set Manager", "Markup Set Manager", "QuickCalc", "|", "Help"]}
          />
        </Bar>
        <Bar>
          <Tool name="Text Style" />
          <Pick label="Text style" value="STANDARD" width="w-[101px]" />
          <Sep />
          <Tool name="Dimension Style" />
          <Pick label="Dimension style" value="STANDARD" width="w-[100px]" />
          <Sep />
          <Tool name="Table Style" />
          <Pick label="Table style" value="Standard" width="w-[100px]" />
        </Bar>
        <Bar>
          <Tools names={["Text Fit", "Text Mask", "Explode Text", "Arc Aligned Text"]} />
        </Bar>
      </div>
      <div className="flex">
        <Bar>
          <Tool name="Layer Manager" />
          <Pick label="Layer" value="0" width="w-[301px]" lead={layerState} />
          <Tools names={["Make Layer Current", "Layer Previous"]} />
        </Bar>
        <Bar>
          <Pick label="Color" value="ByLayer" width="w-[150px]" lead={swatch} />
          <Sep />
          <Pick label="Linetype" value="ByLayer" width="w-40" lead={<Rule width="w-[60px]" />} />
          <Sep />
          <Pick label="Lineweight" value="ByLayer" width="w-[124px]" lead={<Rule width="w-[35px]" />} />
          <Sep />
          <Pick label="Plot style" value="ByColor" width="w-[120px]" disabled />
        </Bar>
        <Bar>
          <Tools names={["Xref to Block", "Block Trim", "Block Extend", "Move Copy Rotate", "Revision Cloud", "Burst Attributes"]} />
        </Bar>
      </div>
      <div className="flex">
        <Bar>
          <Tools
            names={["Temporary Track Point", "Snap From", "|", "Endpoint", "Midpoint", "Intersection", "Apparent Intersection", "Extension", "|", "Center", "Quadrant", "Tangent", "|", "Perpendicular", "Parallel", "Insert", "Node", "|", "Nearest", "Snap None", "|", "Snap Settings"]}
          />
        </Bar>
        <Bar>
          <Tools names={["Library", "Bolt", "Annotate", "|", "Plane", "Stack", "Stack Back", "Lamp"]} />
        </Bar>
        <Bar>
          <Tools names={["Page Flag", "Page Script"]} />
        </Bar>
        <Bar>
          <Tools
            names={["Clip Boundary", "Rotate Clip", "|", "Image Frame", "Image Clip", "Image Globe", "Break Line", "|", "Quick Select", "|", "Move Objects"]}
          />
        </Bar>
        <Bar>
          <Tools
            names={["Layer Edit", "Layer Match", "Layer Current", "Layer Isolate", "Layer Copy", "Layer Walk", "|", "Layer Freeze", "Layer Off", "Layer Lock", "Layer Unlock"]}
          />
        </Bar>
      </div>
    </div>
  );
}

function SideBar({ names }: { names: string[] }) {
  return (
    <div className="w-[26px] flex flex-col items-center pb-1 border-t border-l border-white border-b-2 border-b-[#b5b2a2] border-r border-r-[#aca899]">
      <Grip vertical />
      <Tools names={names} />
    </div>
  );
}

// Filled arrow head, tip at (x, y), pointing along `a` degrees
function Arrow({ x, y, a }: { x: number; y: number; a: number }) {
  return <path d="M0 0l-10-2v4z" transform={`translate(${x} ${y}) rotate(${a})`} fill="#fff" stroke="#fff" />;
}

const dimText: [number, number, string][] = [
  [260, 281, "76.797"],
  [362, 270, "39.2057"],
  [501, 379, "51.4566"],
  [169, 514, "40"],
  [507, 531, "30"],
  [247, 608, "26.6667"],
  [340, 608, "26.6667"],
  [434, 608, "26.6667"],
  [341, 635, "80"],
];

const arrows: [number, number, number][] = [
  [293, 273, 180],
  [431, 273, 0],
  [144, 344, 149],
  [376, 206, -31],
  [476, 286, -106],
  [525, 461, 74],
  [168, 438, -90],
  [168, 577, 90],
  [506, 473, -90],
  [506, 577, 90],
  [201, 611, 180],
  [293, 611, 0],
  [294, 611, 180],
  [387, 611, 0],
  [388, 611, 180],
  [480, 611, 0],
  [201, 637, 180],
  [480, 637, 0],
];

function Drawing() {
  const shape = "M550.5 437.5L782 299.5L830.5 472V577.5H550.5z";
  const bands = Array.from({ length: 24 }, (_, i) => 977 + i * 18.75);
  return (
    <svg className="absolute inset-0 w-full h-full" aria-label="Model space">
      <defs>
        <clipPath id="hatch-area">
          <path d={shape} />
        </clipPath>
      </defs>
      <g transform="translate(-56 -133)" fill="none" stroke="#fff" shapeRendering="crispEdges">
        <path
          stroke="#ff0"
          d="M200.5 577.5V437.5L431.5 299.5L480.5 472.5V577.5zM200.5 437.5L480.5 472.5L293.5 577.5zM431.5 299.5L410.5 463"
        />
        <path d="M293.5 269V572M293 273.5H431M431.5 269V297M144 344L246 285M274 267L375 206M142 341L199 435M373 203L430 297" />
        <path d="M434 298L479 285M483 471L528 459M477 287L497 364M502 382L525 460" />
        <path d="M164 437.5H197M164 577.5H197M168.5 438V500M168.5 516V577M484 472.5H510M484 577.5H510M506.5 473V517M506.5 535V577" />
        <path d="M200.5 581V642M293.5 581V615M387.5 581V615M480.5 581V642M201 611.5H480M201 637.5H480" />
        {arrows.map(([x, y, a]) => (
          <Arrow key={`${x}-${y}-${a}`} x={x + 0.5} y={y + 0.5} a={a} />
        ))}

        <g clipPath="url(#hatch-area)" strokeWidth="3">
          {bands.map((c) => (
            <path key={c} d={`M540 ${c - 540}L850 ${c - 850}M540 ${c - 533}L850 ${c - 843}`} />
          ))}
        </g>
        <path d={shape} stroke="#ff0" />
        <path d="M550.5 437.5V577.5H830.5" stroke="#fff" strokeDasharray="4 3" />
        <path d="M612.5 453V510M584 481.5H640" stroke="#000" strokeWidth="3" />
        <path d="M612.5 453V510M584 481.5H640M609.5 478.5h6v6h-6z" />

        <path d="M68.5 719.5h12v12h-12zM74.5 668V725.5H133" />
        <path d="M74.5 653l-5 14h10zM133.5 720v11l14-5.500z" />
        <path d="M74.5 657v10M72.5 661v6M76.5 661v6M134 725.5h11M134 723.5h7M134 727.5h7" stroke="#888" />
      </g>
      <g transform="translate(-56 -133)" fill="#fff" className="font-['DejaVu_Sans',sans-serif] font-extralight text-base" textAnchor="middle">
        {dimText.map(([x, y, t]) => (
          <text key={`${x}-${y}`} x={x} y={y}>
            {t}
          </text>
        ))}
        <text x="76" y="642">Y</text>
        <text x="164" y="732">X</text>
      </g>
    </svg>
  );
}

const scrollBtn = "flex items-center justify-center shrink-0 rounded-xs border border-white bg-[#c3d3fd] shadow-[inset_0_0_0_1px_#a9c0f4]";

function Viewport() {
  const nav = "w-[18px] h-full flex items-center justify-center border-t border-l border-white border-r border-r-[#aca899] border-b border-b-[#aca899]";
  return (
    <section className="flex-1 min-w-0 flex flex-col border-l-2 border-t-2 border-[#8d8a7c]">
      <div className="flex-1 min-h-0 flex">
        <div className="flex-1 min-w-0 relative bg-black overflow-hidden">
          <Drawing />
          <div
            role="tooltip"
            className="absolute left-[561px] top-[354px] w-[304px] border border-black bg-[#ffffe1] text-center whitespace-pre text-[13px] leading-4 pt-px pb-0.5 font-['Liberation_Sans',sans-serif]"
          >
            <p>HATCH</p>
            <p>Layer: 0, Linetype: ByLayer, Color: ByLayer (White)</p>
            <p>Lineweight: ByLayer,  Plot Style: ByLayer</p>
            <p>Pattern: STEEL  Area: 4708.5288</p>
          </div>
        </div>
        <div className="w-[17px] shrink-0 flex flex-col gap-px bg-[#f8f7f2]">
          <button type="button" aria-label="Scroll up" className={`h-[17px] ${scrollBtn}`}>
            <Chevron dir="up" />
          </button>
          <div className={`h-4 ${scrollBtn}`}>
            <svg width="8" height="8" aria-hidden="true"><path d="M0 .5h7M0 2.5h7M0 4.5h7M0 6.5h7" stroke="#eef4fe" /></svg>
          </div>
          <button type="button" aria-label="Scroll down" className={`h-[17px] mt-auto ${scrollBtn}`}>
            <Chevron dir="down" />
          </button>
        </div>
      </div>
      <div className="h-[17px] shrink-0 flex mr-[17px]">
        {[
          ["First tab", "M2 0v9M9 0v9L4 4.500z"],
          ["Previous tab", "M7 0v9L2 4.500z"],
          ["Next tab", "M3 0v9l5-4.500z"],
          ["Last tab", "M1 0v9l5-4.500zM8.500 0v9"],
        ].map(([label, d]) => (
          <button key={label} type="button" aria-label={label} className={nav}>
            <svg width="10" height="9" aria-hidden="true"><path d={d} stroke="#000" /></svg>
          </button>
        ))}
        <button
          type="button"
          className="w-[54px] ml-[3px] bg-black text-white text-xs leading-4 font-bold [clip-path:polygon(0_0,100%_0,46px_100%,6px_100%)]"
        >
          Model
        </button>
        <button type="button" className="-ml-1.5 w-[50px] h-4 relative text-xs leading-4">
          <svg className="absolute inset-0 w-full h-full" aria-hidden="true">
            <path d="M7 0L1 15.500H43L48 0" fill="none" stroke="#000" />
          </svg>
          配置1
        </button>
        <div className="ml-auto w-[301px] flex bg-[#f8f7f2]">
          <div className="w-1 border border-[#c5c2b2] bg-[#ece9d8]" />
          <button type="button" aria-label="Scroll left" className={`w-4 ${scrollBtn}`}>
            <Chevron dir="left" />
          </button>
          <div className={`w-4 ml-auto mr-px ${scrollBtn}`}>
            <svg width="8" height="8" aria-hidden="true"><path d="M.5 0v7M2.5 0v7M4.5 0v7M6.5 0v7" stroke="#eef4fe" /></svg>
          </div>
          <button type="button" aria-label="Scroll right" className={`w-4 ${scrollBtn}`}>
            <Chevron dir="right" />
          </button>
        </div>
      </div>
    </section>
  );
}

type PropRow = { k: string; v: string; edit?: boolean; lead?: "swatch" | "line" };

const sections: { title: string; rows: PropRow[] }[] = [
  {
    title: "General",
    rows: [
      { k: "Color", v: "ByLayer", edit: true, lead: "swatch" },
      { k: "Layer", v: "0", edit: true },
      { k: "Linetype", v: "ByLa...", edit: true, lead: "line" },
      { k: "Linetyp...", v: "1", edit: true },
      { k: "Linewe...", v: "ByLa...", edit: true, lead: "line" },
      { k: "Thickn...", v: "0", edit: true },
    ],
  },
  {
    title: "Plot style",
    rows: [
      { k: "Plot style", v: "ByColor" },
      { k: "Plot sty...", v: "acad.ctb", edit: true },
      { k: "Plot tab...", v: "Model" },
      { k: "Plot tab...", v: "Color depend..." },
    ],
  },
  {
    title: "View",
    rows: [
      { k: "Center X", v: "365.4335" },
      { k: "Center Y", v: "22.771" },
      { k: "Center Z", v: "0" },
      { k: "Height", v: "174.4922" },
      { k: "Width", v: "254.1703" },
    ],
  },
  {
    title: "Misc",
    rows: [
      { k: "UCS ic...", v: "Yes", edit: true },
      { k: "UCS ic...", v: "No", edit: true },
      { k: "UCS pe...", v: "Yes", edit: true },
      { k: "UCS N...", v: "" },
    ],
  },
];

function PropertiesPalette() {
  return (
    <aside className="w-[178px] shrink-0 flex flex-col bg-[#eeede8] pl-2 pr-2.5 pt-1.5 pb-[11px]">
      <div className="flex items-center gap-1 -mr-1">
        <div className="flex-1 flex flex-col gap-0.5">
          <div className="h-[3px] border-t border-white border-b border-b-[#a9a797]" />
          <div className="h-[3px] border-t border-white border-b border-b-[#a9a797]" />
        </div>
        <button type="button" aria-label="Close palette" className="w-2.5 h-2.5 border-r border-b border-black bg-[#dfe8f4] flex items-center justify-center">
          <svg width="7" height="7" aria-hidden="true"><path d="M1 1l5 5M6 1L1 6" stroke="#000" strokeWidth="1.6" /></svg>
        </button>
      </div>
      <div className="flex items-center gap-1.5 mt-2 ml-0.5 -mr-1.5 h-6">
        <Pick label="Selection" value="No selection" width="w-20" />
        <div className="flex border border-[#cfccbd] divide-x divide-[#cfccbd]">
          <Tools names={["Toggle Pickadd", "Select Objects", "Filter Objects"]} />
        </div>
      </div>
      <div className="flex flex-col gap-2 mt-2.5 ml-1 w-[147px]">
        {sections.map((s) => (
          <section key={s.title}>
            <h2 className="h-4 pl-1.5 pr-2 flex items-center justify-between bg-[#c8c4b2] text-white text-xs leading-4 font-bold [clip-path:polygon(4px_0,calc(100%-4px)_0,100%_4px,100%_100%,0_100%,0_4px)]">
              {s.title}
              <svg width="9" height="10" aria-hidden="true">
                <path d="M.5 5L4.500 1l4 4M.5 9.500l4-4 4 4" fill="none" stroke="#fff" strokeWidth="1.3" />
              </svg>
            </h2>
            <table className="w-[131px] ml-4 table-fixed border-collapse text-xs leading-[15px]">
              <tbody>
                {s.rows.map((r, i) => (
                  <tr key={i} className="h-4">
                    <th scope="row" className="w-[50px] h-4 p-0 pl-[3px] border border-t-0 border-[#c8c4b2] text-left font-normal whitespace-nowrap">
                      {r.k}
                    </th>
                    <td className={`h-4 p-0 pl-0.5 border border-t-0 border-[#c8c4b2] whitespace-nowrap ${r.edit ? "bg-white" : ""}`}>
                      <div className="flex items-center h-[15px] overflow-hidden">
                        {r.lead === "swatch" && <span className="w-2.5 h-2.5 border border-black mr-1.5 ml-px" />}
                        {r.lead === "line" && <span className="w-[29px] h-px bg-black ml-0.5 mr-1" />}
                        {r.v}
                      </div>
                    </td>
                  </tr>
                ))}
              </tbody>
            </table>
          </section>
        ))}
      </div>
      <div className="mt-auto ml-1 w-[148px] h-[31px] border border-[#c8c4b2]" />
    </aside>
  );
}

function CommandWindow() {
  return (
    <section className="h-[73px] shrink-0 flex pl-1.5 pt-1 border-t-2 border-black/80">
      <div className="flex pt-1 pb-2">
        <Grip height="h-full" />
      </div>
      <div className="ml-0.5 mb-1 flex-1 min-w-0 flex flex-col bg-white border-t-2 border-l-2 border-black text-[13px] leading-[13px] font-['Liberation_Mono',monospace]">
        <div className="flex-1">
          <p>Analyzing the selected data...</p>
          <p>Analyzing internal islands...</p>
          <p>Pick internal point or [Select objects/remove Boundaries]:</p>
        </div>
        <label className="h-4 flex items-center border-t border-[#8d8a7c]">
          <span>Command:</span>
          <input type="text" aria-label="Command" className="flex-1 min-w-0 h-3.5 outline-none pl-1" />
        </label>
      </div>
      <div className="w-[17px] bg-[#ece9d8]" />
    </section>
  );
}

const modes: [string, boolean][] = [
  ["SNAP", false],
  ["GRID", false],
  ["ORTHO", true],
  ["POLAR", false],
  ["OSNAP", false],
  ["OTRACK", true],
  ["DYN", false],
  ["LWT", false],
  ["MODEL", true],
];

function StatusBar() {
  return (
    <footer className="h-[22px] shrink-0 flex items-center gap-1 pl-[5px] border-t-2 border-[#b5b2a2] text-xs leading-4">
      <div className="w-[238px] h-[18px] pl-px border border-t-[#aca899] border-l-[#aca899] border-r-white border-b-white">
        397.0978, 10.6535 , 0.0000
      </div>
      {modes.map(([name, on]) => (
        <button
          key={name}
          type="button"
          aria-pressed={on}
          className={`h-[18px] leading-4 border ${
            on
              ? "border-t-black border-l-black border-r-white border-b-white bg-[#f4f2e9]"
              : "border-t-white border-l-white border-r-[#aca899] border-b-[#aca899]"
          }`}
        >
          {name}
        </button>
      ))}
      <div className="ml-auto flex items-center gap-1 pr-0.5">
        <svg width="16" height="18" aria-hidden="true">
          <path d="M0 0h16v18H0z" fill="#8f8c80" />
          <path d="M2.500 3.500h12v8h-1v4l-4-4h-7z" fill="#18e4e4" stroke="#000" />
          <L d="M5 10l2-5 2 5M11.5 5v5" s="#044" />
        </svg>
        <svg width="44" height="18" aria-hidden="true">
          <path d="M.5 17.5V.5h43v17z" fill="#f2efe2" stroke="#c6c2b0" />
          <L d="M3 4l6 6M9 2l5 4-8 6M14 2L8 9" s="#60728c" w={1.6} />
          <path d="M12 6l6 10H6z" fill="#ffdc1c" stroke="#a88808" />
          <L d="M12 9v4M12 14v1" w={1.6} />
          <L d="M33.5 9V4c1-3 6-3 7 0v3" s="#444" w={2} />
          <path d="M24 8h11v8H24z" fill="#e4b81c" stroke="#6c5808" />
          <L d="M25 11h9M25 13.5h9" s="#7c6808" />
        </svg>
        <button type="button" aria-label="Status bar menu" className="w-3 h-4 flex items-center justify-center">
          <svg width="7" height="4" aria-hidden="true"><path d="M0 0h7L3.500 4z" fill="#000" /></svg>
        </button>
        <svg width="12" height="12" aria-hidden="true">
          <path d="M9 1h2v2H9zM5 5h2v2H5zM9 5h2v2H9zM1 9h2v2H1zM5 9h2v2H5zM9 9h2v2H9z" fill="#b8b4a2" />
        </svg>
      </div>
    </footer>
  );
}

function Balloon() {
  return (
    <div role="status" className="absolute right-[5px] bottom-[30px] w-[290px] h-[75px] rounded-[14px] border border-black bg-[#ffffe1] px-2 pt-1.5">
      <div className="flex items-center">
        <svg width="17" height="17" viewBox="0 0 17 17" aria-hidden="true">
          <path d="M8 1a6.500 6 0 0 1 2 12.500L9 16l-2-2.500A6.500 6 0 0 1 8 1z" fill="#d9e9fa" stroke="#7c9cc4" />
          <L d="M8 3v2M7 6.500h1.500V11M6.500 11.500h4" s="#123c9c" w={1.8} />
        </svg>
        <h2 className="flex-1 ml-2 text-[13px] leading-4 font-bold">Communication Center</h2>
        <button type="button" aria-label="Close message" className="w-4 h-4 border border-[#8d8a7c] bg-[#ece9d8] flex items-center justify-center">
          <svg width="8" height="8" aria-hidden="true"><path d="M1 1l6 6M7 1L1 7" stroke="#000" strokeWidth="2" /></svg>
        </button>
      </div>
      <p className="mt-1 ml-1.5 text-xs leading-4 whitespace-nowrap">The easy way to keep you and your software up-to-date.</p>
      <a href="#communication" className="ml-1.5 text-xs leading-5 text-[#0000ee] underline">
        Click here.
      </a>
      <svg width="26" height="22" className="absolute top-[71px] left-[203px]" aria-hidden="true">
        <path d="M1 1L24 19L20 1" fill="#ffffe1" />
        <path d="M1 2.500L24 19L20 2.500" fill="none" stroke="#000" />
      </svg>
    </div>
  );
}

export default function App() {
  return (
    <div className={`relative h-screen flex flex-col overflow-hidden bg-[#ece9d8] text-black ${serif}`}>
      <TitleBar />
      <div className="flex-1 min-h-0 flex flex-col border-x-2 border-b-2 border-[#0a4ce0]">
        <MenuBar />
        <Toolbars />
        <main className="flex-1 min-h-0 flex pb-[5px]">
          <div className="shrink-0 flex">
            <div className="flex flex-col">
              <SideBar
                names={["Line", "Construction Line", "Polyline", "Polygon", "Rectangle", "Arc", "Circle", "Cloud Outline", "Spline", "Ellipse", "Ellipse Arc", "Insert Block", "Make Block", "Point", "Hatch", "Gradient", "Region", "Table", "Multiline Text"]}
              />
              <SideBar names={["Gear", "Home"]} />
            </div>
            <div className="flex flex-col">
              <SideBar
                names={["Erase", "Copy Object", "Mirror", "Offset", "Array", "Move", "Rotate", "Scale", "Stretch", "Trim", "Extend", "Break at Point", "Break", "Join", "Chamfer", "Fillet", "Explode"]}
              />
              <SideBar names={["Bring to Front", "Send to Back", "Bring Above", "Send Under"]} />
            </div>
          </div>
          <Viewport />
          <div className="w-2 shrink-0 border-l-2 border-l-white border-r-2 border-r-black" />
          <PropertiesPalette />
        </main>
        <CommandWindow />
        <StatusBar />
      </div>
      <Balloon />
    </div>
  );
}
